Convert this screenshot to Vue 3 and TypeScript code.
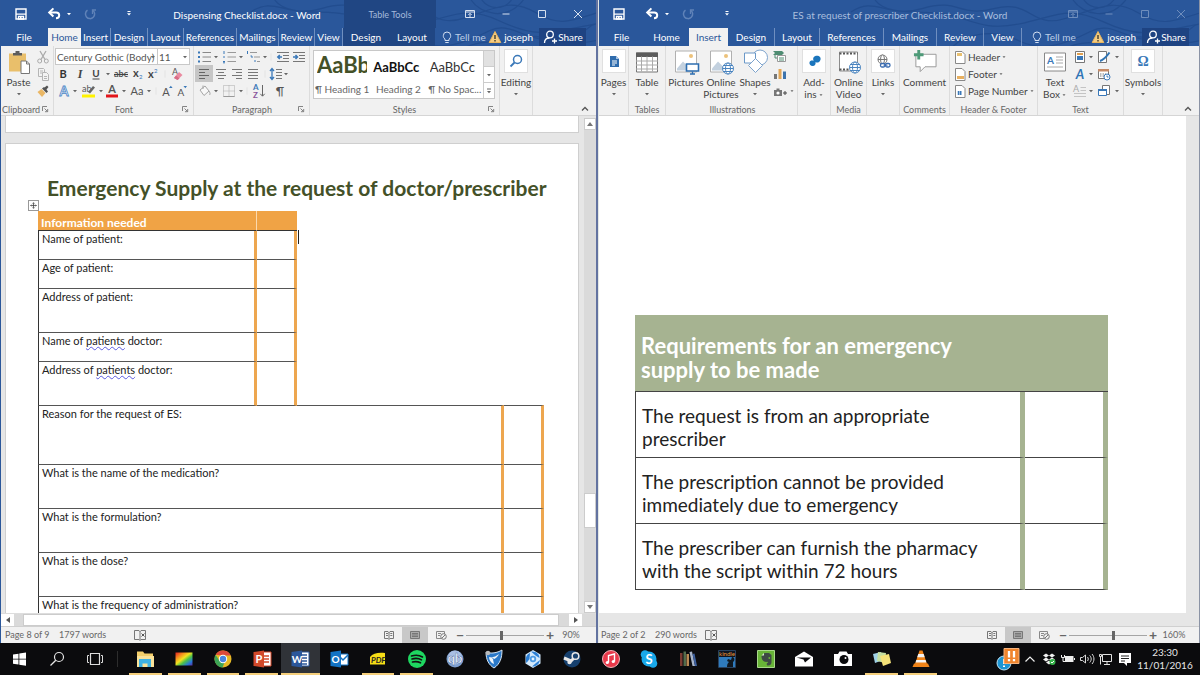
<script setup lang="ts">
import { h, ref } from 'vue'

interface Tab { label: string; width: number; active?: boolean; divided?: boolean; context?: boolean }
interface Tool { icon: string; width: number; label?: string; on?: boolean }
interface WordWindow {
  id: string
  title: string
  left: number
  context: string
  tabs: Tab[]
  page: string
  words: string
  zoom: string
  zoomPos: number
}

const icons: Record<string, string> = {
  save: '<path d="M3 3h10v10H3z" fill="none" stroke="#fff" stroke-width="1.4"/><path d="M3 8.2h10M5.5 10.5h5V13h-5z" fill="none" stroke="#fff" stroke-width="1.3"/><path d="M7 11h1.500v2H7z" fill="#fff"/>',
  undo: '<path d="M4 6.500h6.200c2 0 3 1.300 3 2.800s-1.200 2.900-3.200 2.900" fill="none" stroke="#fff" stroke-width="2"/><path d="M7.400 2.400 3.200 6.500l4.200 4" fill="none" stroke="#fff" stroke-width="2"/>',
  redo: '<path d="M5.500 4.200a4.600 4.600 0 1 0 5.500.3" fill="none" stroke="#5f82b8" stroke-width="1.500"/><path d="M10.500 8V4h3.500" fill="none" stroke="#5f82b8" stroke-width="1.300"/>',
  caretW: '<path d="M6 7h4L8 9.200z" fill="#fff"/>',
  qat: '<path d="M6.500 5.500h3" stroke="#fff"/><path d="M6 7.300h4L8 9.600z" fill="#fff"/>',
  caret: '<path d="M6 7h4L8 9.200z" fill="#666"/>',
  more: '<path d="M6 6h4" stroke="#666"/><path d="M6 8h4l-2 2.200z" fill="#666"/>',
  sep: '<path d="M8 1v14" stroke="#d4d4d4"/>',
  display: '<path d="M3.500 4.500h9v7h-9zM3.500 6h9" fill="none" stroke="#d7e1f0"/><path d="M8 11V7.500M6.300 9 8 7.300 9.700 9" fill="none" stroke="#d7e1f0"/>',
  min: '<path d="M4.500 8h7" stroke="#d7e1f0"/>',
  max: '<path d="M4.500 4.500h7v7h-7z" fill="none" stroke="#d7e1f0"/>',
  close: '<path d="m4 4 8 8M12 4l-8 8" stroke="#d7e1f0"/>',
  bulb: '<path d="M6 11.500V10C4.500 9 4.300 7.800 4.300 6.700a3.700 3.700 0 0 1 7.400 0C11.700 7.800 11.500 9 10 10v1.500z" fill="none" stroke="#d4e0f2"/><path d="M6.300 13.500h3.400" stroke="#d4e0f2"/>',
  warn: '<path d="M8 2.500 13.800 13.500H2.200z" fill="#f4cc83" stroke="#e9b65d" stroke-linejoin="round"/><path d="M8 6v4M8 11v1.500" stroke="#4a4433" stroke-width="1.500"/>',
  person: '<circle cx="8" cy="5.500" r="3.300" fill="none" stroke="#fff" stroke-width="1.300"/><path d="M2.500 14c0-3 2-5 5-5M10 12h5M12.500 9.500v5" fill="none" stroke="#fff" stroke-width="1.300"/>',
  collapse: '<path d="m5 9.500 3-3 3 3" fill="none" stroke="#555" stroke-width="1.300"/>',
  launch: '<path d="M5.500 10V5.500H10M7.500 7.500l3 3M10.700 8v2.700H8" fill="none" stroke="#777" stroke-width=".9"/>',
  paste: '<path d="M2 4h17v18H2z" fill="#e9bf6b"/><path d="M6 3.500h9V6H6z" fill="#5d5d5d"/><path d="M8.500 1.500h4v3h-4z" fill="#5d5d5d"/><path d="M14 11.500h5.500l3 3V24H14z" fill="#fff" stroke="#777"/><path d="M19.500 11.500v3h3" fill="none" stroke="#777"/>',
  cut: '<path d="m5 2 5 8.500M11 2 6 10.500" stroke="#aaa" stroke-width="1.300"/><circle cx="4.700" cy="12" r="2" fill="none" stroke="#aaa"/><circle cx="11.300" cy="12" r="2" fill="none" stroke="#aaa"/>',
  copy: '<path d="M3.500 2.500h5l1 1v7h-6z" fill="#f3f3f3" stroke="#b5b5b5"/><path d="M7.500 6.500h4l2 2v6h-6z" fill="#f3f3f3" stroke="#b5b5b5"/><path d="M9 10.500h3M9 12.500h3M5 5h3M5 7h2" stroke="#b5b5b5"/>',
  painter: '<path d="m2.500 9 4-3 4 4-3.500 4z" fill="#eab765"/><path d="m7 5.500 4.500 4.500 1.500-1.500-1.500-2 2-2.500-1.500-1.500-2.500 2L9 4z" fill="#555"/>',
  bold: '<text x="8" y="12" text-anchor="middle" font-weight="700" font-size="11" fill="#333">B</text>',
  italic: '<text x="8" y="12" text-anchor="middle" font-style="italic" font-family="Liberation Serif" font-weight="700" font-size="12" fill="#444">I</text>',
  underline: '<text x="8" y="11" text-anchor="middle" font-size="10" font-weight="700" fill="#444">U</text><path d="M4.500 13h7" stroke="#444"/>',
  strike: '<text x="8" y="11" text-anchor="middle" font-size="9" font-weight="700" fill="#555">abc</text><path d="M1 8.500h14" stroke="#444"/>',
  sub: '<text x="3" y="11" font-weight="700" font-size="11" fill="#444">x</text><text x="9" y="13" font-size="6" fill="#3a78b8">2</text>',
  sup: '<text x="3" y="12" font-weight="700" font-size="11" fill="#444">x</text><text x="9" y="7" font-size="6" fill="#3a78b8">2</text>',
  eraser: '<text x="3" y="9" font-size="9" fill="#555">A</text><path d="m5 12 5-6 3.500 3-5 5z" fill="#ea8aa0"/><path d="m5 12 2-2.400 3.500 3-2 1.400z" fill="#d86c86"/>',
  effect: '<text x="8" y="12.500" text-anchor="middle" font-size="13" font-weight="700" fill="#fff" stroke="#4d87c7" stroke-width=".8">A</text>',
  highlight: '<text x="2" y="9" font-size="9" fill="#555">ab</text><path d="m8 9 5-6 2 1.500-5 6z" fill="#666"/><path d="M2 11.500h13v3H2z" fill="#fff200"/>',
  fontColor: '<text x="8" y="10" text-anchor="middle" font-size="11" font-weight="700" fill="#555">A</text><path d="M2 11.500h12v3H2z" fill="#e3151b"/>',
  caseIcon: '<text x="8" y="12" text-anchor="middle" font-size="11" fill="#555">Aa</text>',
  grow: '<text x="7" y="13" text-anchor="middle" font-size="11" fill="#555">A</text><path d="m10 5 1.800-2.200L13.600 5z" fill="#3a78b8"/>',
  shrink: '<text x="7" y="13" text-anchor="middle" font-size="10" fill="#555">A</text><path d="m9.500 3 1.800 2.200L13 3z" fill="#3a78b8"/>',
  bullets: '<path d="M2 3.500h2M2 8h2M2 12.500h2" stroke="#3a78b8" stroke-width="2"/><path d="M6.500 3.500H15M6.500 8H15M6.500 12.500H15" stroke="#888"/>',
  numbers: '<path d="M3 2v3M2 8h2M2 12.500h2M2 13.800h2" stroke="#3a78b8"/><path d="M6.500 3.500H15M6.500 8H15M6.500 12.500H15" stroke="#999"/>',
  multi: '<path d="M2.500 2v3M5.500 7h1.500v2M9 12h2" stroke="#3a78b8" fill="none"/><path d="M5 3.500h7M9 8h6M12 12.500h3" stroke="#999"/>',
  outdent: '<path d="M2 3.500h12M8 6.500h6M8 9.500h6M2 12.500h12" stroke="#777"/><path d="M7 8H3M4.800 6 2.800 8l2 2" fill="none" stroke="#3a78b8" stroke-width="1.500"/>',
  indent: '<path d="M2 3.500h12M8 6.500h6M8 9.500h6M2 12.500h12" stroke="#777"/><path d="M2 8h4M4.500 6l2 2-2 2" fill="none" stroke="#3a78b8" stroke-width="1.500"/>',
  alignL: '<path d="M3 3.500h10M3 6.500h6M3 9.500h10M3 12.500h6" stroke="#666"/>',
  alignC: '<path d="M3 3.500h10M5 6.500h6M3 9.500h10M5 12.500h6" stroke="#777"/>',
  alignR: '<path d="M3 3.500h10M7 6.500h6M3 9.500h10M7 12.500h6" stroke="#777"/>',
  justify: '<path d="M3 3.500h10M3 6.500h10M3 9.500h10M3 12.500h10" stroke="#777"/>',
  spacing: '<path d="M4 2.500v11M2 5l2-2.500L6 5M2 11l2 2.500L6 11" fill="none" stroke="#3a78b8" stroke-width="1.300"/><path d="M8 3.500h6M8 6.500h6M8 9.500h6M8 12.500h6" stroke="#777"/>',
  bucket: '<path d="m4 7 5-4 4 5-5 4.500z" fill="#f8f8f8" stroke="#a5a5a5"/><path d="M7 6V2.500M13 8c1 1.500 1.500 3 .5 4" fill="none" stroke="#a5a5a5"/>',
  borders: '<path d="M2.500 2.500h11v11h-11zM8 2.500v11M2.500 8h11" fill="none" stroke="#aaa" stroke-dasharray="1 1"/><path d="M2.500 13.500h11" stroke="#999"/>',
  sort: '<text x="2" y="7" font-size="8" font-weight="700" fill="#3a78b8">A</text><text x="2" y="15" font-size="8" font-weight="700" fill="#8a559c">Z</text><path d="M11.500 2v11M9.300 10.800l2.200 2.400 2.200-2.400" fill="none" stroke="#666"/>',
  pilcrow: '<text x="8" y="12" text-anchor="middle" font-size="12" fill="#555">¶</text>',
  find: '<circle cx="9.500" cy="6.500" r="4" fill="none" stroke="#3a78b8" stroke-width="1.500"/><path d="m6.500 9.500-4 4" stroke="#3a78b8" stroke-width="1.800"/>',
  pages: '<path d="M4 3h6l3 3v8H4z" fill="#2f6cad"/><path d="M6 8h5M6 10h5M6 12h3" stroke="#fff"/><path d="M10 3v3h3" fill="#a9c5e4"/>',
  table: '<path d="M1.500 3.500h21v19h-21z" fill="#fff" stroke="#777"/><path d="M1 3h22v4.500H1z" fill="#5c5c5c"/><path d="M1 11.500h22M1 15.500h22M1 19.500h22M6.500 7v15M12 7v15M17.500 7v15" stroke="#aaa"/>',
  picture: '<path d="M1.500 1.500h21v21h-21z" fill="#fff" stroke="#b0b0b0"/><path d="m3 19 6-7 5 5 2-2v6H3z" fill="#c3d1df"/><circle cx="17" cy="6.500" r="2" fill="#ecc27b"/><path d="M12.500 14.500h12v7h-12z" fill="#fff" stroke="#2d6db0" stroke-width="1.600"/><path d="M16 24.500h5M18.500 22v2" stroke="#2d6db0" stroke-width="1.300"/>',
  online: '<path d="M1.500 1.500h21v21h-21z" fill="#fff" stroke="#b0b0b0"/><path d="m3 19 6-7 5 5v4H3z" fill="#c3d1df"/><circle cx="17" cy="6.500" r="2" fill="#ecc27b"/><g fill="#fff" stroke="#4a84bf"><circle cx="19" cy="19" r="5.500"/><ellipse cx="19" cy="19" rx="2.500" ry="5.500"/><path d="M13.500 19h11M14.500 16h9M14.500 22h9"/></g>',
  shapes: '<circle cx="17" cy="8" r="7.500" fill="#fff" stroke="#7da3cc"/><path d="M1.500 3.500h11v10h-11z" fill="#fff" stroke="#6a98c8"/><path d="m12.500 9 7 7-7 7-7-7z" fill="#fff" stroke="#7da3cc"/>',
  smart: '<path d="M1 2h9l2 2-2 2H1l2-2z" fill="#4e8c72"/><path d="M5.500 6.500h8v6h-8z" fill="#fff" stroke="#999"/><path d="M3 6v3h2M7 9h5M7 11h5" stroke="#4e8c72" fill="none"/>',
  chart: '<path d="M2 8h3v5H2z" fill="#777"/><path d="M6.500 3h3v10h-3z" fill="#e2a656"/><path d="M11 5.500h3V13h-3z" fill="#3d74ad"/>',
  shot: '<path d="M2 7h8v6H2zM4.500 5.500h3V7h-3z" fill="#777"/><circle cx="6" cy="10" r="1.600" fill="#fff"/><path d="M11 10h4M13 8v4" stroke="#444"/>',
  addins: '<path d="M7.500 4.500c1-2 5-2.500 6.500-.5s0 5-2 5.500c-1 .2-2 0-2.500-.5.5 2-.5 4-2.800 4S3 11 3.500 9.200 6 7 7.800 7.800C7 6.800 7 5.500 7.500 4.500z" fill="#1b75bc"/>',
  video: '<path d="M2.500 2.500h18v19h-18z" fill="#fff" stroke="#8c8c8c"/><path d="M2.500 4h18M2.500 20h18" stroke="#555" stroke-width="2" stroke-dasharray="2 1.500"/><g fill="#fff" stroke="#4a84bf"><circle cx="18" cy="18" r="5.500"/><ellipse cx="18" cy="18" rx="2.500" ry="5.500"/><path d="M12.500 18h11M13.500 15h9M13.500 21h9"/></g>',
  links: '<g fill="#fff" stroke="#777"><circle cx="7.500" cy="6.500" r="4.500"/><ellipse cx="7.500" cy="6.500" rx="2" ry="4.500"/><path d="M3 6.500h9"/></g><rect x="5.500" y="10.500" width="4.500" height="3.500" rx="1.500" fill="#fff" stroke="#3a6cb0" stroke-width="1.300"/><rect x="10.500" y="10.500" width="4.500" height="3.500" rx="1.500" fill="#fff" stroke="#3a6cb0" stroke-width="1.300"/><path d="M8.500 12.200h4" stroke="#3a6cb0"/>',
  comment: '<path d="M3.500 5.500h21v13H13l-5 5v-5H3.500z" fill="#fff" stroke="#999"/><path d="M6.500 1v10M1.500 6h10" stroke="#4e9a78" stroke-width="3"/>',
  header: '<path d="M3.500 2.500h6.500l3 3v9h-9.500z" fill="#fff" stroke="#888"/><path d="M5 4h5v3H5z" fill="#e8c070"/>',
  footer: '<path d="M3.500 2.500h6.500l3 3v9h-9.500z" fill="#fff" stroke="#888"/><path d="M5 10h7v3H5z" fill="#e8b060"/>',
  number: '<path d="M3.500 2.500h6.500l3 3v9h-9.500z" fill="#fff" stroke="#888"/><path d="M6.500 8v4M8.500 8v4M5.500 9h4.500M5.500 11h4.500" stroke="#3a78b8"/>',
  textbox: '<path d="M1.500 3.500h21v18h-21z" fill="#fff" stroke="#888"/><text x="4" y="14" font-size="10" font-weight="700" fill="#3a78b8">A</text><path d="M13 7.500h7M13 10.500h7M13 13.500h7M4 17.500h16" stroke="#aaa"/>',
  parts: '<path d="M3.500 2.500h9v11h-9z" fill="#fff" stroke="#777"/><path d="M5 4h6v2H5z" fill="#e0a050"/><path d="M5 7h6v4H5z" fill="#3a78b8"/>',
  art: '<text x="8" y="13" text-anchor="middle" font-size="13" font-weight="700" font-style="italic" fill="#2f74b5">A</text>',
  dropcap: '<text x="1" y="9" font-size="9" fill="#aaa">A</text><path d="M8.500 4.500H14M8.500 7.500H14M2 10.500h12M2 13.500h12" stroke="#c4c4c4"/>',
  sign: '<path d="M2.500 2.500h8v11h-8z" fill="#fff" stroke="#777"/><path d="M4 12c3-1 7-5 9.500-8.500" stroke="#2f74b5" stroke-width="2" fill="none"/>',
  date: '<path d="M2.500 3.500h10v9h-10z" fill="#fff" stroke="#777"/><path d="M2 3h11v2.500H2z" fill="#c58a66"/><path d="M4 8h6M4 10h4" stroke="#777" stroke-dasharray="1.500 1"/><circle cx="11" cy="11" r="3" fill="#fff" stroke="#3a78b8"/><path d="M11 9.500V11h1.500" stroke="#3a78b8" fill="none"/>',
  object: '<path d="M6.500 2.500h7v9h-7z" fill="#fff" stroke="#777"/><path d="M2.500 6.500h8v6h-8z" fill="#fff" stroke="#3a78b8"/><path d="M2 6h9v2H2z" fill="#3a78b8"/>',
  omega: '<text x="8" y="13" text-anchor="middle" font-size="14" font-weight="700" font-family="Liberation Serif" fill="#3a78b8">Ω</text>',
  proof: '<path d="M2.500 3.500H7l1 1 1-1h4.500v9H9l-1 1-1-1H2.500zM8 4v9" fill="none" stroke="#777"/><path d="m9.500 6.500 3 3M12.500 6.500l-3 3" stroke="#555"/>',
  read: '<path d="M3.500 4.500H7l1 1 1-1h3.500v7H9l-1 1-1-1H3.500zM8 5v7" fill="none" stroke="#777"/><path d="M5 6.500h2M5 8.500h2M9.300 6.500h2M9.300 8.500h2" stroke="#777"/>',
  print: '<path d="M3.500 4.500h9v7h-9z" fill="#aaa" stroke="#777"/><path d="M5 6.500h6M5 8h6M5 9.500h6" stroke="#777"/>',
  web: '<path d="M3.500 4.500h8v7h-8z" fill="none" stroke="#888"/><path d="M5 6.500h3M5 8.500h2" stroke="#888"/><circle cx="10.500" cy="9.500" r="2.800" fill="#f1f1f1" stroke="#777"/><path d="m9 11 3-3" stroke="#777"/>',
  up: '<path d="m8 6 3 4H5z" fill="#777"/>',
  down: '<path d="m8 10 3-4H5z" fill="#777"/>',
  leftA: '<path d="m6 8 4-3v6z" fill="#555"/>',
  rightA: '<path d="m10 8-4-3v6z" fill="#555"/>',
  windows: '<path d="m5 6.500 5.500-.8v5H5zM11.300 5.500l6.700-1v6.200h-6.700zM5 11.500h5.500v5l-5.500-.8zM11.300 11.500H18v6.200l-6.700-1z" fill="#fff"/>',
  search: '<circle cx="13" cy="9" r="4.500" fill="none" stroke="#e5e5e5" stroke-width="1.200"/><path d="M9.800 12.300 4.500 17.500" stroke="#e5e5e5" stroke-width="1.300"/>',
  taskview: '<path d="M6.500 5.500h9v11h-9z" fill="none" stroke="#ddd" stroke-width="1.200"/><path d="M5 7.500H3.500v7H5M17 7.500h1.500v7H17" fill="none" stroke="#ddd"/>',
  explorer: '<path d="M3 3.500h6l1.500 2H19v13H3z" fill="#f4cf6b"/><path d="M3 8h17v11H3z" fill="#fbe39a"/><path d="M5 11h12v8h-3.500v-3.500h-5V19H5z" fill="#3fb2e3"/>',
  rainbow: '<defs><linearGradient id="rb" x1="0" y1="0" x2="1" y2="1"><stop offset="0" stop-color="#e02020"/><stop offset=".25" stop-color="#f58b1f"/><stop offset=".45" stop-color="#f3e21f"/><stop offset=".62" stop-color="#4dc247"/><stop offset=".82" stop-color="#2678d8"/><stop offset="1" stop-color="#5a2ea0"/></linearGradient></defs><path d="M2.500 4.500h17v13h-17z" fill="url(#rb)"/>',
  chrome: '<circle cx="11" cy="11" r="8.500" fill="#e6b926"/><path d="M3.600 6.800A8.500 8.500 0 0 1 18.700 7.500H11z" fill="#dc4a3c"/><path d="M3.600 6.800A8.500 8.500 0 0 0 10.500 19.500L13 13 7 12z" fill="#3da556"/><circle cx="11" cy="11" r="4.200" fill="#fff"/><circle cx="11" cy="11" r="3.200" fill="#4a86e0"/>',
  ppt: '<path d="M11 4h9v14h-9z" fill="#fff" stroke="#d2492a"/><path d="M13 8h5M13 11h5M13 14h5" stroke="#d2492a" stroke-width="1.400"/><path d="M2.500 4 13 2.500v17L2.500 18z" fill="#d2492a"/><text x="4.500" y="15" font-size="11" font-weight="700" fill="#fff">P</text>',
  word: '<path d="M11 4h9v14h-9z" fill="#fff" stroke="#2b579a"/><path d="M13 7h5M13 10h5M13 13h5M13 16h5" stroke="#2b579a" stroke-width="1.300"/><path d="M2.500 4 13 2.500v17L2.500 18z" fill="#2b579a"/><text x="2.800" y="15" font-size="10" font-weight="700" fill="#fff">W</text>',
  outlook: '<path d="M11 6h9v11h-9z" fill="#fff" stroke="#1273c4"/><path d="m12 9 3 3 5-5" stroke="#1273c4" stroke-width="1.500" fill="none"/><path d="M2.500 4 13 2.500v17L2.500 18z" fill="#1273c4"/><text x="3.500" y="15" font-size="10" font-weight="700" fill="#fff">O</text>',
  pdf: '<path d="M3 9c3-4 8-4.500 15-4V16.500H3z" fill="#f6dd16"/><text x="4" y="15" font-size="8" font-weight="700" font-style="italic" fill="#222">PDF</text>',
  spotify: '<circle cx="11" cy="11" r="9" fill="#1ed760"/><path d="M5.500 8c4-1.200 8-.8 11 1M6 11c3.500-1 7-.6 9.500.9M6.500 14c3-.8 5.500-.5 8 .8" stroke="#111" stroke-width="1.600" fill="none" stroke-linecap="round"/>',
  qb: '<circle cx="11" cy="11" r="8.500" fill="#7f9fd0"/><circle cx="11" cy="9.500" r="7" fill="#a9bfe4"/><text x="11" y="15" text-anchor="middle" font-size="13" font-weight="700" fill="#fff" stroke="#42639f" stroke-width=".4">qb</text>',
  rocket: '<path d="M3 4c5 2 11 1 16-2 0 8-2 14-8 18C6 17 3 12 3 4z" fill="#2a78c8" stroke="#d8e6f4"/><path d="M6 9c3 1 7-.5 10-3-1 3-4 5-6 5.500L11 16c-3-1-5-4-5-7z" fill="#eef5fb"/><path d="M9 9.500l3 3 3-4" stroke="#2a78c8" fill="none"/><circle cx="5" cy="5" r="2.200" fill="#bbb"/>',
  heroes: '<path d="m11 2 7.500 4.500v9L11 20l-7.500-4.500v-9z" fill="#d3e9fc"/><path d="M9 3.500c5-.5 8.500 2.500 8.500 6.500l-4-2.500zM18 12c-1 4.500-4 7-8 6.500l4-3.500zM4.500 15c-1.500-4-.5-8.500 3.500-10L7.500 11z" fill="#2c7fd4"/><circle cx="11" cy="11" r="3.200" fill="#4d9be4"/><circle cx="11" cy="11" r="1.400" fill="#e8f5ff"/>',
  steam: '<circle cx="11" cy="11" r="8.500" fill="#16406e"/><path d="m3 10 7 3 4-4" stroke="#e8e8e8" stroke-width="3" fill="none"/><circle cx="14.500" cy="8" r="3.300" fill="#16406e" stroke="#e8e8e8" stroke-width="1.500"/><circle cx="8.500" cy="14" r="2.200" fill="#e8e8e8"/>',
  itunes: '<circle cx="11" cy="11" r="8.500" fill="#e8394a" stroke="#f6b5ba"/><path d="M8.500 14.500V7.500l6-1.500v7.500" fill="none" stroke="#fff" stroke-width="1.400"/><circle cx="7.300" cy="14.500" r="1.600" fill="#fff"/><circle cx="13.300" cy="13.500" r="1.600" fill="#fff"/>',
  skype: '<circle cx="11" cy="11" r="7.500" fill="#18a8ea"/><circle cx="7" cy="6.500" r="4.300" fill="#18a8ea"/><circle cx="15" cy="15.500" r="4.300" fill="#18a8ea"/><text x="11" y="16" text-anchor="middle" font-size="13" font-weight="700" fill="#fff">S</text>',
  books: '<path d="M3 5h2.500v13H3z" fill="#7a3a32"/><path d="M6.500 3.500H9V18H6.500z" fill="#536b4c"/><path d="M9.500 6H12v12H9.500z" fill="#b98a55"/><path d="m12.500 4 2.500-.5L18 18h-2.500z" fill="#a8b4c8"/><path d="m15.500 6 2-.5L20 18h-2z" fill="#3d5f9e"/>',
  kindle: '<path d="M2.500 2.500h17v17h-17z" fill="#0d1420" stroke="#284260"/><path d="M3 9h16v10H3z" fill="#2f7bbd"/><path d="M11 19c0-3 1-4 2-5l-2-1 1-2 3 1 1-3c2 0 3 2 2 4l-1 1v5z" fill="#101820"/><text x="11" y="8" text-anchor="middle" font-size="6" fill="#e99a35">kindle</text>',
  evernote: '<path d="M2.500 2.500h17v17h-17z" fill="#68b437" stroke="#a9d88a"/><path d="M6.500 8 9.500 5H14l2.500 2v7c0 2.300-1 3.500-3.300 3.500-2 0-2-2.700 0-2.700-.5-1-1-1.300-1.700-.8-3 0-5-2-5-6z" fill="#3e4a44"/><path d="M6.500 7.500H9V5z" fill="#d8eccb"/><circle cx="14.300" cy="10" r=".9" fill="#68b437"/>',
  mail: '<path d="m2 9 9-5.500L20 9v9.500H2z" fill="#fff"/><path d="M3.500 9.500H18l-6 5-1.500-3z" fill="#0b0b0d"/>',
  camera: '<path d="M2 6h4l1.500-2.500h7L16 6h4v12H2z" fill="#fff"/><circle cx="12" cy="11.500" r="4.500" fill="#0b0b0d"/><circle cx="13.500" cy="10" r="1" fill="#fff"/>',
  sticky: '<path d="m2 6 8-2 2 8-8 3z" fill="#9fd1e6"/><path d="m7 4 8 1-1 10-8-2z" fill="#c5dfa0"/><path d="m9 8 9-2 2 9-8 3z" fill="#f5e278"/>',
  vlc: '<path d="M9.500 2.500h3L17 16H5z" fill="#ef8318"/><path d="M8.300 6h5.400l1 3.300H7.200zM6.300 12h9.300l.8 2.500H5.500z" fill="#f4f4f4"/><path d="M4 15.500h14l1.500 3.500h-17z" fill="#ef8318"/>',
  alert: '<circle cx="8" cy="16" r="7" fill="#1d95d3" stroke="#bfe4f6"/><path d="M8 12v5M8 18.500v1.500" stroke="#fff" stroke-width="2"/><path d="M8 1.500h15v15H8z" fill="#f0852d" stroke="#f7b27c"/><path d="M13 4v6.500M18 4v6.500M13 12v2.200M18 12v2.200" stroke="#fff" stroke-width="2.300"/>',
  chevron: '<path d="m6.500 13.500 4.500-4.500 4.500 4.500" fill="none" stroke="#eee" stroke-width="1.200"/>',
  dropbox: '<path d="m8 5.500 3 2-3 2-3-2zM14 5.500l3 2-3 2-3-2zM8 9.500l3 2-3 2-3-2zM14 9.500l3 2-3 2-3-2zM11 12.500l3 2-3 2-3-2z" fill="#f2f2f2"/><circle cx="14.500" cy="14" r="3" fill="#36b34a"/><path d="m13 14 1 1 2-2" stroke="#fff" fill="none"/>',
  battery: '<path d="M8 8h8.500v6H8zM17 10h1v2h-1z" fill="#eee"/><path d="M4.500 7v2.500h3V7M6 9.500v4h2" stroke="#eee" fill="none"/>',
  volume: '<path d="M4.500 9.500h2l3-2.500v8l-3-2.500h-2z" fill="none" stroke="#ddd"/><path d="M11.500 9c1 1.200 1 2.800 0 4M13.700 7.500c2 2.200 2 4.800 0 7M16 6c2.600 3 2.600 7 0 10" fill="none" stroke="#ddd"/>',
  network: '<path d="M7.500 6.500h9v7h-9zM9 16.500h6M12 14v2M5.500 8v8.500M4.500 6.500h2v2h-2z" fill="none" stroke="#e2e2e2"/>',
  notes: '<path d="M5 5h12v10h-4v3l-3-3H5z" fill="#fff"/><path d="M7 8h8M7 10.500h8M7 13h4" stroke="#222"/>',
  move: '<path d="M8 3v10M3 8h10M6.500 4.500 8 3l1.500 1.500M6.500 11.500 8 13l1.500-1.500M4.500 6.500 3 8l1.500 1.500M11.500 6.500 13 8l-1.500 1.500" fill="none" stroke="#444" stroke-width="1.400"/>',
}

const Icon = (props: { name: string; size?: number }) => {
  const size = props.size ?? 16
  return h('svg', {
    class: 'icon', width: size, height: size, viewBox: `0 0 ${size} ${size}`,
    'aria-hidden': 'true', innerHTML: icons[props.name],
  })
}
Icon.props = ['name', 'size']

const windows: WordWindow[] = [
  {
    id: 'left', title: 'Dispensing Checklist.docx - Word', left: 344, context: 'Table Tools',
    tabs: [
      { label: 'File', width: 48 }, { label: 'Home', width: 33, active: true },
      { label: 'Insert', width: 30, divided: true }, { label: 'Design', width: 37, divided: true },
      { label: 'Layout', width: 36, divided: true }, { label: 'References', width: 53, divided: true },
      { label: 'Mailings', width: 42, divided: true }, { label: 'Review', width: 36, divided: true },
      { label: 'View', width: 28, divided: true }, { label: 'Design', width: 46, context: true },
      { label: 'Layout', width: 46, context: true },
    ],
    page: 'Page 8 of 9', words: '1797 words', zoom: '90%', zoomPos: 45,
  },
  {
    id: 'right', title: 'ES at request of prescriber Checklist.docx - Word', left: 454, context: '',
    tabs: [
      { label: 'File', width: 45 }, { label: 'Home', width: 45 },
      { label: 'Insert', width: 39, active: true }, { label: 'Design', width: 47, divided: true },
      { label: 'Layout', width: 45, divided: true }, { label: 'References', width: 64, divided: true },
      { label: 'Mailings', width: 53, divided: true }, { label: 'Review', width: 47, divided: true },
      { label: 'View', width: 38, divided: true },
    ],
    page: 'Page 2 of 2', words: '290 words', zoom: '160%', zoomPos: 57,
  },
]

const sep: Tool = { icon: 'sep', width: 8 }
const caret = (width = 6): Tool => ({ icon: 'caret', width, label: 'More options' })

const fontRows: Tool[][] = [
  [
    { icon: 'bold', width: 16, label: 'Bold' }, { icon: 'italic', width: 17, label: 'Italic' },
    { icon: 'underline', width: 16, label: 'Underline' }, caret(8),
    { icon: 'strike', width: 18, label: 'Strikethrough' }, { icon: 'sub', width: 15, label: 'Subscript' },
    { icon: 'sup', width: 16, label: 'Superscript' }, sep, { icon: 'eraser', width: 16, label: 'Clear formatting' },
  ],
  [
    { icon: 'effect', width: 17, label: 'Text effects' }, caret(), { icon: 'highlight', width: 20, label: 'Highlight' },
    caret(), { icon: 'fontColor', width: 16, label: 'Font colour' }, caret(8),
    { icon: 'caseIcon', width: 18, label: 'Change case' }, caret(), sep,
    { icon: 'grow', width: 14, label: 'Grow font' }, { icon: 'shrink', width: 16, label: 'Shrink font' },
  ],
]

const paragraphRows: Tool[][] = [
  [
    { icon: 'bullets', width: 18, label: 'Bullets' }, caret(), { icon: 'numbers', width: 20, label: 'Numbering' },
    caret(4), { icon: 'multi', width: 20, label: 'Multilevel list' }, caret(4), sep,
    { icon: 'outdent', width: 16, label: 'Decrease indent' }, { icon: 'indent', width: 16, label: 'Increase indent' },
  ],
  [
    { icon: 'alignL', width: 18, label: 'Align left', on: true }, { icon: 'alignC', width: 16, label: 'Centre' },
    { icon: 'alignR', width: 16, label: 'Align right' }, { icon: 'justify', width: 16, label: 'Justify' }, sep,
    { icon: 'spacing', width: 14, label: 'Line spacing' }, caret(),
  ],
  [
    { icon: 'bucket', width: 18, label: 'Shading' }, caret(), { icon: 'borders', width: 20, label: 'Borders' },
    caret(4), sep, { icon: 'sort', width: 16, label: 'Sort' }, { icon: 'pilcrow', width: 26, label: 'Show marks' },
  ],
]

const textRows: Tool[][] = [
  [{ icon: 'parts', width: 16, label: 'Quick parts' }, caret(), { icon: 'sign', width: 20, label: 'Signature line' }, caret()],
  [{ icon: 'art', width: 16, label: 'WordArt' }, caret(), { icon: 'date', width: 20, label: 'Date and time' }],
  [{ icon: 'dropcap', width: 16, label: 'Drop cap' }, caret(), { icon: 'object', width: 20, label: 'Object' }, caret()],
]

const styleCells = [
  { sample: 'AaBb', name: '¶ Heading 1', kind: 'h1' },
  { sample: 'AaBbCc', name: 'Heading 2', kind: 'h2' },
  { sample: 'AaBbCc', name: '¶ No Spac...', kind: 'plain' },
]

const patientRows = [
  { before: 'Name of patient:', flagged: '', after: '', size: 'short' },
  { before: 'Age of patient:', flagged: '', after: '', size: 'short' },
  { before: 'Address of patient:', flagged: '', after: '', size: 'mid' },
  { before: 'Name of ', flagged: 'patients', after: ' doctor:', size: 'short' },
  { before: 'Address of ', flagged: 'patients', after: ' doctor:', size: 'mid' },
]

const medicationRows = [
  { text: 'Reason for the request of ES:', size: 'tall' },
  { text: 'What is the name of the medication?', size: 'mid' },
  { text: 'What is the formulation?', size: 'mid' },
  { text: 'What is the dose?', size: 'mid' },
  { text: 'What is the frequency of administration?', size: 'mid' },
]

const requirements = [
  'The request is from an appropriate prescriber',
  'The prescription cannot be provided immediately due to emergency',
  'The prescriber can furnish the pharmacy with the script within 72 hours',
]

const apps = [
  { icon: 'explorer', label: 'File Explorer', open: true }, { icon: 'rainbow', label: 'Colours', open: true },
  { icon: 'chrome', label: 'Chrome', open: true }, { icon: 'ppt', label: 'PowerPoint', open: true },
  { icon: 'word', label: 'Word', open: true, active: true }, { icon: 'outlook', label: 'Outlook' },
  { icon: 'pdf', label: 'PDF', open: true }, { icon: 'spotify', label: 'Spotify', open: true },
  { icon: 'qb', label: 'qBittorrent' }, { icon: 'rocket', label: 'Rocket League' }, { icon: 'heroes', label: 'Heroes' },
  { icon: 'steam', label: 'Steam' }, { icon: 'itunes', label: 'iTunes' }, { icon: 'skype', label: 'Skype' },
  { icon: 'books', label: 'Library' }, { icon: 'kindle', label: 'Kindle' }, { icon: 'evernote', label: 'Evernote' },
  { icon: 'mail', label: 'Mail' }, { icon: 'camera', label: 'Camera' },
  { icon: 'sticky', label: 'Sticky Notes', open: true }, { icon: 'vlc', label: 'VLC', open: true },
]

const tray = ['chevron', 'dropbox', 'battery', 'volume', 'network', 'notes']

const fontName = ref('Century Gothic (Body)')
const fontSize = ref('11')
</script>

<template>
  <div class="desktop">
    <main class="windows">
      <section v-for="w in windows" :key="w.id" class="window" :class="w.id">
        <header class="chrome">
          <svg class="waves" viewBox="0 0 300 46" preserveAspectRatio="xMaxYMin slice" aria-hidden="true">
            <path d="M10 10c20-14 30 6 60-3s30 8 60 0 30 18 60 8 40-16 60-4 30 6 50 0M30 0c10 14 40 8 60 12s30 14 60 8 40-16 70-2 40 10 80 2M90 46c10-20 40-22 60-12s40 2 60-8 30 12 60 6 20-10 30-12M180 46c20-16 40-8 60-14s20 10 60 2M195 0c8 12 30 18 44 0M204 0c6 8 18 9 25 0" />
          </svg>
          <div class="titlebar">
            <div class="lead" :style="{ width: w.left + 'px' }">
              <button class="q save" aria-label="Save"><Icon name="save" /></button>
              <button class="q undo" aria-label="Undo"><Icon name="undo" /></button>
              <button class="q tiny" aria-label="Undo list"><Icon name="caretW" /></button>
              <button class="q redo" aria-label="Redo"><Icon name="redo" /></button>
              <button class="q custom" aria-label="Customise toolbar"><Icon name="qat" /></button>
              <h1 class="wtitle">{{ w.title }}</h1>
            </div>
            <div v-if="w.context" class="contextual">{{ w.context }}</div>
            <div class="controls">
              <button aria-label="Ribbon display"><Icon name="display" /></button>
              <button aria-label="Minimise"><Icon name="min" /></button>
              <button aria-label="Maximise"><Icon name="max" /></button>
              <button aria-label="Close"><Icon name="close" /></button>
            </div>
          </div>
          <nav class="tabs" aria-label="Ribbon tabs">
            <button
              v-for="(t, i) in w.tabs" :key="i" class="tab"
              :class="{ active: t.active, divided: t.divided, context: t.context }"
              :style="{ width: t.width + 'px' }"
            >{{ t.label }}</button>
            <button class="tell"><Icon name="bulb" /><span>Tell me</span></button>
            <button class="user"><Icon name="warn" /><span>joseph</span></button>
            <button class="share"><Icon name="person" /><span>Share</span></button>
          </nav>
        </header>

        <div v-if="w.id === 'left'" class="ribbon">
          <section class="group g-clip">
            <div class="body">
              <button class="big paste"><Icon name="paste" :size="24" /><span>Paste</span><Icon name="caret" class="drop" /></button>
              <div class="stack">
                <button aria-label="Cut"><Icon name="cut" /></button>
                <button aria-label="Copy"><Icon name="copy" /></button>
                <button aria-label="Format painter"><Icon name="painter" /></button>
              </div>
            </div>
            <footer class="glabel">Clipboard<Icon name="launch" class="launch" /></footer>
          </section>
          <section class="group g-font">
            <div class="body rows">
              <div class="combos">
                <span class="combo wide"><select v-model="fontName" aria-label="Font"><option>Century Gothic (Body)</option></select><Icon name="caret" /></span>
                <span class="combo"><select v-model="fontSize" aria-label="Font size"><option>11</option></select><Icon name="caret" /></span>
              </div>
              <div v-for="(row, r) in fontRows" :key="r" class="tools">
                <template v-for="(t, i) in row" :key="i">
                  <Icon v-if="t.icon === 'sep'" name="sep" class="sep" />
                  <button v-else class="tool" :style="{ width: t.width + 'px' }" :aria-label="t.label"><Icon :name="t.icon" /></button>
                </template>
              </div>
            </div>
            <footer class="glabel">Font<Icon name="launch" class="launch" /></footer>
          </section>
          <section class="group g-para">
            <div class="body rows">
              <div v-for="(row, r) in paragraphRows" :key="r" class="tools">
                <template v-for="(t, i) in row" :key="i">
                  <Icon v-if="t.icon === 'sep'" name="sep" class="sep" />
                  <button v-else class="tool" :class="{ on: t.on }" :style="{ width: t.width + 'px' }" :aria-label="t.label"><Icon :name="t.icon" /></button>
                </template>
              </div>
            </div>
            <footer class="glabel">Paragraph<Icon name="launch" class="launch" /></footer>
          </section>
          <section class="group g-styles">
            <div class="body">
              <div class="gallery">
                <button v-for="s in styleCells" :key="s.name" class="cell">
                  <span class="sample" :class="s.kind">{{ s.sample }}</span>
                  <span class="cname">{{ s.name }}</span>
                </button>
                <div class="scroller">
                  <button class="off" aria-label="Previous styles"></button>
                  <button aria-label="Next styles"><Icon name="caret" /></button>
                  <button aria-label="All styles"><Icon name="more" /></button>
                </div>
              </div>
            </div>
            <footer class="glabel">Styles<Icon name="launch" class="launch" /></footer>
          </section>
          <section class="group g-edit">
            <div class="body">
              <button class="big"><span class="boxed"><Icon name="find" /></span><span>Editing</span><Icon name="caret" class="drop" /></button>
            </div>
            <footer class="glabel"></footer>
          </section>
          <button class="collapse" aria-label="Collapse ribbon"><Icon name="collapse" /></button>
        </div>

        <div v-else class="ribbon">
          <section class="group g-pages">
            <div class="body"><button class="big"><span class="boxed"><Icon name="pages" /></span><span>Pages</span><Icon name="caret" class="drop" /></button></div>
            <footer class="glabel"></footer>
          </section>
          <section class="group g-tables">
            <div class="body"><button class="big"><Icon name="table" :size="24" /><span>Table</span><Icon name="caret" class="drop" /></button></div>
            <footer class="glabel">Tables</footer>
          </section>
          <section class="group g-ill">
            <div class="body">
              <button class="big w36"><Icon name="picture" :size="24" /><span>Pictures</span></button>
              <button class="big w34"><Icon name="online" :size="24" /><span>Online<br>Pictures</span></button>
              <button class="big w34"><Icon name="shapes" :size="24" /><span>Shapes</span><Icon name="caret" class="drop" /></button>
              <div class="stack">
                <button aria-label="SmartArt"><Icon name="smart" /></button>
                <button aria-label="Chart"><Icon name="chart" /></button>
                <button aria-label="Screenshot" class="shot"><Icon name="shot" /><Icon name="caret" class="inlinecaret" /></button>
              </div>
            </div>
            <footer class="glabel">Illustrations</footer>
          </section>
          <section class="group g-add">
            <div class="body"><button class="big"><span class="boxed"><Icon name="addins" /></span><span>Add-<br>ins<Icon name="caret" class="inlinecaret" /></span></button></div>
            <footer class="glabel"></footer>
          </section>
          <section class="group g-media">
            <div class="body"><button class="big"><Icon name="video" :size="24" /><span>Online<br>Video</span></button></div>
            <footer class="glabel">Media</footer>
          </section>
          <section class="group g-links">
            <div class="body"><button class="big"><span class="boxed"><Icon name="links" /></span><span>Links</span><Icon name="caret" class="drop" /></button></div>
            <footer class="glabel"></footer>
          </section>
          <section class="group g-comments">
            <div class="body"><button class="big"><Icon name="comment" :size="26" /><span>Comment</span></button></div>
            <footer class="glabel">Comments</footer>
          </section>
          <section class="group g-hf">
            <div class="body rows">
              <button class="line"><Icon name="header" />Header<Icon name="caret" class="inlinecaret" /></button>
              <button class="line"><Icon name="footer" />Footer<Icon name="caret" class="inlinecaret" /></button>
              <button class="line"><Icon name="number" />Page Number<Icon name="caret" class="inlinecaret" /></button>
            </div>
            <footer class="glabel">Header &amp; Footer</footer>
          </section>
          <section class="group g-text">
            <div class="body">
              <button class="big w34"><Icon name="textbox" :size="24" /><span>Text<br>Box<Icon name="caret" class="inlinecaret" /></span></button>
              <div class="rows">
                <div v-for="(row, r) in textRows" :key="r" class="tools">
                  <button v-for="(t, i) in row" :key="i" class="tool" :style="{ width: t.width + 'px' }" :aria-label="t.label"><Icon :name="t.icon" /></button>
                </div>
              </div>
            </div>
            <footer class="glabel">Text</footer>
          </section>
          <section class="group g-sym">
            <div class="body"><button class="big"><span class="boxed"><Icon name="omega" /></span><span>Symbols</span><Icon name="caret" class="drop" /></button></div>
            <footer class="glabel"></footer>
          </section>
          <button class="collapse" aria-label="Collapse ribbon"><Icon name="collapse" /></button>
        </div>

        <div v-if="w.id === 'left'" class="workspace">
          <div class="pages">
            <div class="sheet tail"></div>
            <article class="sheet current">
              <h2 class="doc-title">Emergency Supply at the request of doctor/prescriber</h2>
              <div class="first-table">
                <span class="handle"><Icon name="move" :size="16" /></span>
                <table class="form patient">
                  <thead><tr><th>Information needed</th><th></th></tr></thead>
                  <tbody>
                    <tr v-for="(r, i) in patientRows" :key="i" :class="r.size">
                      <td>{{ r.before }}<span v-if="r.flagged" class="flagged">{{ r.flagged }}</span>{{ r.after }}</td><td></td>
                    </tr>
                  </tbody>
                </table>
                <span class="cursor"></span>
              </div>
              <table class="form medication">
                <tbody>
                  <tr v-for="r in medicationRows" :key="r.text" :class="r.size"><td>{{ r.text }}</td><td></td></tr>
                </tbody>
              </table>
            </article>
          </div>
          <div class="vscroll">
            <button aria-label="Scroll up"><Icon name="up" /></button>
            <span class="vthumb"></span>
            <button aria-label="Scroll down"><Icon name="down" /></button>
          </div>
        </div>
        <div v-else class="workspace">
          <article class="sheet req-sheet">
            <table class="req">
              <colgroup><col><col class="tick"></colgroup>
              <thead><tr><th colspan="2"><div>Requirements for an emergency supply to be made</div></th></tr></thead>
              <tbody><tr v-for="r in requirements" :key="r"><td>{{ r }}</td><td></td></tr></tbody>
            </table>
          </article>
        </div>

        <div v-if="w.id === 'left'" class="hscroll">
          <button aria-label="Scroll left"><Icon name="leftA" /></button>
          <span class="hthumb"></span>
          <button class="end" aria-label="Scroll right"><Icon name="rightA" /></button>
        </div>
        <div v-else class="hscroll blank"></div>

        <footer class="status">
          <span class="pageno">{{ w.page }}</span><span class="words">{{ w.words }}</span><Icon name="proof" />
          <div class="views">
            <button aria-label="Read mode"><Icon name="read" /></button>
            <button class="sel" aria-label="Print layout"><Icon name="print" /></button>
            <button aria-label="Web layout"><Icon name="web" /></button>
          </div>
          <button class="zb" aria-label="Zoom out">−</button>
          <input class="zoom" type="range" min="0" max="100" :value="w.zoomPos" aria-label="Zoom">
          <button class="zb" aria-label="Zoom in">+</button>
          <span class="pct">{{ w.zoom }}</span>
        </footer>
      </section>
    </main>

    <footer class="taskbar">
      <button class="sys" aria-label="Start"><Icon name="windows" :size="22" /></button>
      <button class="sys" aria-label="Search"><Icon name="search" :size="22" /></button>
      <button class="sys" aria-label="Task view"><Icon name="taskview" :size="22" /></button>
      <span class="tsep"></span>
      <div class="apps">
        <button v-for="a in apps" :key="a.icon" class="app" :class="{ open: a.open, active: a.active }" :aria-label="a.label"><Icon :name="a.icon" :size="22" /></button>
      </div>
      <div class="tray">
        <button class="alert" aria-label="Alerts"><Icon name="alert" :size="24" /></button>
        <button v-for="t in tray" :key="t" class="ti" :aria-label="t"><Icon :name="t" :size="22" /></button>
        <time class="clock"><span>23:30</span><span>11/01/2016</span></time>
      </div>
    </footer>
  </div>
</template>

<style>
html, body { margin: 0; overflow: hidden; }
</style>

<style scoped>
.desktop {
  height: 100vh; display: flex; flex-direction: column; overflow: hidden;
  background: #0b0b0d; color: #444;
  font-family: "Segoe UI", Lato, "Open Sans", sans-serif; font-size: 10px; line-height: 12px;
}
.desktop * { box-sizing: border-box; }
button { border: 0; padding: 0; margin: 0; background: none; color: inherit; font: inherit; display: flex; align-items: center; justify-content: center; }
.icon { flex: none; display: block; overflow: visible; }
.windows { flex: 1; min-height: 0; display: grid; grid-template-columns: 598fr 602fr; }
.window { display: flex; flex-direction: column; min-width: 0; min-height: 0; background: #f1f1f1; }
.window.left { border-left: 1px solid #2b579a; border-right: 2px solid #6373a0; }
.window.right { border-left: 1px solid #e3e8e6; border-right: 1px solid #8b93a5; }

.chrome { flex: none; position: relative; overflow: hidden; background: #2a579b; color: #fff; }
.waves { position: absolute; right: 0; top: 0; width: 60%; height: 46px; fill: none; stroke: #1d4788; stroke-width: 1; opacity: .6; }
.titlebar { position: relative; display: flex; height: 28px; }
.lead { flex: none; display: flex; align-items: center; }
.left .lead { margin-right: -1px; }
.q { height: 28px; }
.save { width: 40px; }
.undo { width: 26px; }
.tiny { width: 4px; }
.redo { width: 38px; }
.custom { width: 40px; }
.wtitle { flex: 1; margin: 0; padding-top: 2px; text-align: center; font-size: 10px; font-weight: 400; white-space: nowrap; }
.right .wtitle { color: #a9bedd; }
.contextual { width: 92px; background: #204683; color: #a5badb; display: flex; align-items: center; justify-content: center; padding-top: 2px; font-size: 9px; }
.controls { margin-left: auto; display: flex; align-items: center; }
.controls button { width: 36px; height: 26px; }
.right .controls { opacity: .4; }
.tabs { position: relative; display: flex; height: 18px; align-items: stretch; white-space: nowrap; }
.left .tab:first-child { margin-left: -1px; }
.tab { flex: none; }
.tab.active { background: #f1f1f1; color: #2b579a; }
.tab.divided { border-right: 1px solid #6f8fc0; }
.tab.context { background: #204683; }
.tell { margin-left: 4px; color: #bccde6; }
.right .tell { margin-left: 7px; }
.user { margin-left: auto; gap: 1px; }
.share { margin: 0 10px 0 6px; width: 47px; background: #1e4382; }

.ribbon { flex: none; display: flex; position: relative; height: 70px; border-bottom: 1px solid #d5d5d5; background: #f1f1f1; }
.group { flex: none; display: flex; flex-direction: column; border-right: 1px solid #dcdcdc; padding-top: 2px; }
.body { flex: 1; display: flex; min-height: 0; }
.rows { display: flex; flex-direction: column; }
.glabel { position: relative; height: 11px; text-align: center; font-size: 9px; line-height: 11px; color: #666; white-space: nowrap; }
.launch { position: absolute; right: 0; top: -3px; }
.g-clip { width: 53px; padding-left: 1px; }
.g-clip .glabel { padding-right: 14px; }
.g-font { width: 140px; padding-left: 1px; }
.g-para { width: 116px; padding-left: 1px; }
.g-styles { width: 190px; }
.g-edit { width: 33px; }
.g-pages { width: 30px; }
.g-tables { width: 37px; }
.g-ill { width: 132px; padding-left: 2px; }
.g-add { width: 33px; }
.g-media { width: 36px; }
.g-links { width: 33px; }
.g-comments { width: 50px; }
.g-hf { width: 88px; }
.g-text { width: 86px; }
.g-sym { width: 39px; }
.big { flex: 1; flex-direction: column; justify-content: flex-start; padding-top: 1px; text-align: center; white-space: nowrap; min-width: 0; }
.big > .icon:first-child { margin-bottom: 2px; height: 25px; }
.drop { margin-top: -2px; }
.boxed { width: 24px; height: 24px; margin-bottom: 3px; border: 1px solid #e0e0e0; background: #fff; display: flex; align-items: center; justify-content: center; }
.inlinecaret { display: inline-block; height: 12px; vertical-align: middle; margin: 0 -5px 0 -4px; }
.paste { flex: none; width: 33px; }
.w36 { flex: none; width: 36px; }
.w34 { flex: none; width: 34px; }
.stack { display: flex; flex-direction: column; }
.stack button { width: 16px; height: 17px; }
.shot { justify-content: flex-start; }
.combos { display: flex; height: 17px; }
.combo { position: relative; display: block; width: 33px; height: 17px; margin-left: -1px; border: 1px solid #c8c8c8; background: #fff; }
.combo.wide { width: 103px; margin-left: 0; }
.combo select { width: 100%; height: 15px; appearance: none; border: 0; padding: 0 0 0 1px; background: none; color: #555; font: inherit; }
.combo .icon { position: absolute; right: -4px; top: 0; }
.tools { display: flex; height: 17px; align-items: center; }
.tool { flex: none; height: 17px; }
.tool.on { background: #c6c6c6; }
.sep { width: 8px; }
.line { height: 17px; justify-content: flex-start; padding-left: 2px; white-space: nowrap; }
.gallery { flex: 1; min-width: 0; display: flex; margin: 2px 4px 5px 3px; border: 1px solid #c8c8c8; background: #fff; }
.cell { flex: 1; min-width: 0; flex-direction: column; justify-content: space-between; padding: 2px 3px 3px; overflow: hidden; }
.sample { width: 100%; height: 26px; overflow: hidden; white-space: nowrap; text-align: left; font-family: "Century Gothic", "URW Gothic", Lato, sans-serif; font-size: 13px; line-height: 28px; color: #333; }
.sample.h1 { font-size: 22px; line-height: 24px; font-weight: 700; color: #445128; }
.sample.h2 { font-weight: 700; color: #111; }
.cname { white-space: nowrap; color: #666; }
.scroller { flex: none; width: 11px; display: flex; flex-direction: column; border-left: 1px solid #ccc; overflow: hidden; }
.scroller button { flex: 1; min-height: 0; }
.scroller button + button { border-top: 1px solid #ccc; }
.scroller .off { background: #e1e1e1; }
.collapse { margin: auto 3px -2px auto; }

.workspace { flex: 1; min-height: 0; display: flex; overflow: hidden; background: #e6e6e6; }
.pages { flex: 1; min-width: 0; overflow: hidden; display: flex; flex-direction: column; gap: 10px; padding: 0 5px 0 4px; }
.sheet { background: #fff; }
.tail { flex: none; height: 17px; border: 1px solid #cfcfcf; border-top: 0; }
.current { flex: 1; min-height: 0; overflow: hidden; border: 1px solid #cfcfcf; border-bottom: 0; padding-left: 32px; }
.doc-title, .form, .req { font-family: "Century Gothic", "URW Gothic", Lato, sans-serif; }
.doc-title { margin: 31px 0 0 9px; font-size: 21px; line-height: 26px; font-weight: 700; color: #445128; white-space: nowrap; }
.first-table { position: relative; display: flex; margin-top: 10px; }
.handle { position: absolute; left: -10px; top: -11px; width: 11px; height: 11px; border: 1px solid #999; background: #fff; display: flex; align-items: center; justify-content: center; }
.handle .icon { width: 9px; height: 9px; }
.cursor { width: 1px; height: 14px; margin: 19px 0 0 1px; background: #222; }
table { border-collapse: separate; border-spacing: 0; table-layout: fixed; }
.form { color: #222; font-size: 11px; line-height: 14px; }
.patient { width: 259px; }
.medication { width: 506px; margin-top: -1px; }
.form td, .form th { padding: 1px 3px; vertical-align: top; text-align: left; }
.form th { height: 20px; padding-top: 5px; padding-bottom: 0; background: #f0a345; color: #fff; border-bottom: 1px solid #333; font-size: 12px; line-height: 13px; }
.form th:first-child { border-right: 1px solid #fbd9ae; }
.form td { border-bottom: 1px solid #555; border-right: 3px solid #eda64f; }
.form td:first-child { border-left: 1px solid #333; }
.form tr > :last-child { width: 40px; }
.form tr.short td { height: 29px; }
.form tr.mid td { height: 44px; }
.form tr.tall td { height: 60px; border-top: 1px solid #555; }
.flagged { text-decoration: underline wavy #5a5ae0 1px; text-decoration-skip-ink: none; text-underline-offset: 1px; }
.vscroll { width: 12px; margin-top: 2px; background: #dadada; display: flex; flex-direction: column; }
.vscroll button { height: 12px; background: #fff; border: 1px solid #ccc; }
.vthumb { height: 35px; margin: auto 0 73px; background: #fff; border: 1px solid #ccc; }
.req-sheet { flex: 1; margin-right: 13px; padding: 199px 78px 0 36px; }
.req { width: 100%; max-width: 473px; color: #222; font-size: 19px; line-height: 23px; }
.tick { width: 83px; }
.req th, .req td { vertical-align: top; text-align: left; }
.req th { height: 77px; padding: 19px 6px 0; background: #a6b391; border-bottom: 1px solid #444; color: #fff; font-size: 22px; line-height: 24px; }
.req th div { width: 340px; }
.req td { height: 66px; padding: 12px 6px 0; border-bottom: 1px solid #444; border-right: 5px solid #a6b391; }
.req td:first-child { border-left: 1px solid #444; }

.hscroll { flex: none; height: 13px; display: flex; align-items: stretch; background: #dadada; border-top: 1px solid #ddd; }
.hscroll.blank { background: #e6e6e6; border: 0; }
.hscroll button { width: 13px; background: #fff; }
.hthumb { flex: 1; margin: 0 10px 0 9px; background: #fff; border: 1px solid #ccc; }
.hscroll .end { margin-right: 14px; }

.status { flex: none; height: 17px; display: flex; align-items: center; border-top: 1px solid #d0d0d0; font-size: 9px; color: #666; white-space: nowrap; }
.pageno { flex: none; width: 58px; padding-left: 4px; }
.right .pageno { padding-left: 2px; width: 56px; }
.words { flex: none; width: 73px; }
.right .words { width: 48px; }
.views { margin-left: auto; display: flex; height: 16px; }
.views button { width: 26px; }
.views .sel { background: #c8c8c8; }
.zb { width: 12px; font-size: 14px; font-weight: 700; }
.pct { width: 30px; margin-right: 10px; text-align: center; }
.zoom { appearance: none; width: 78px; height: 12px; margin: 0; background: linear-gradient(#a5a5a5, #a5a5a5) center / 100% 1px no-repeat; }
.zoom::-webkit-slider-thumb { appearance: none; width: 3px; height: 9px; background: #666; }

.taskbar { flex: none; height: 32px; display: flex; background: #0b0b0d; color: #e6e6e6; }
.sys { width: 38px; }
.tsep { width: 1px; height: 16px; margin: 8px 8px 8px 3px; background: #2d2d2d; }
.apps { flex: 1; display: grid; grid-template-columns: repeat(21, 1fr); }
.app { position: relative; }
.app.active { background: #303338; }
.app.open::after { content: ""; position: absolute; left: 3px; right: 3px; bottom: 0; height: 2px; background: #f5cf7c; }
.app.active::after { left: 0; right: 0; }
.tray { width: 260px; display: flex; align-items: stretch; }
.alert { width: 24px; margin-left: 56px; }
.ti { width: 19px; }
.clock { flex: 1; display: flex; flex-direction: column; align-items: center; justify-content: center; padding-right: 4px; line-height: 13px; }
</style>
